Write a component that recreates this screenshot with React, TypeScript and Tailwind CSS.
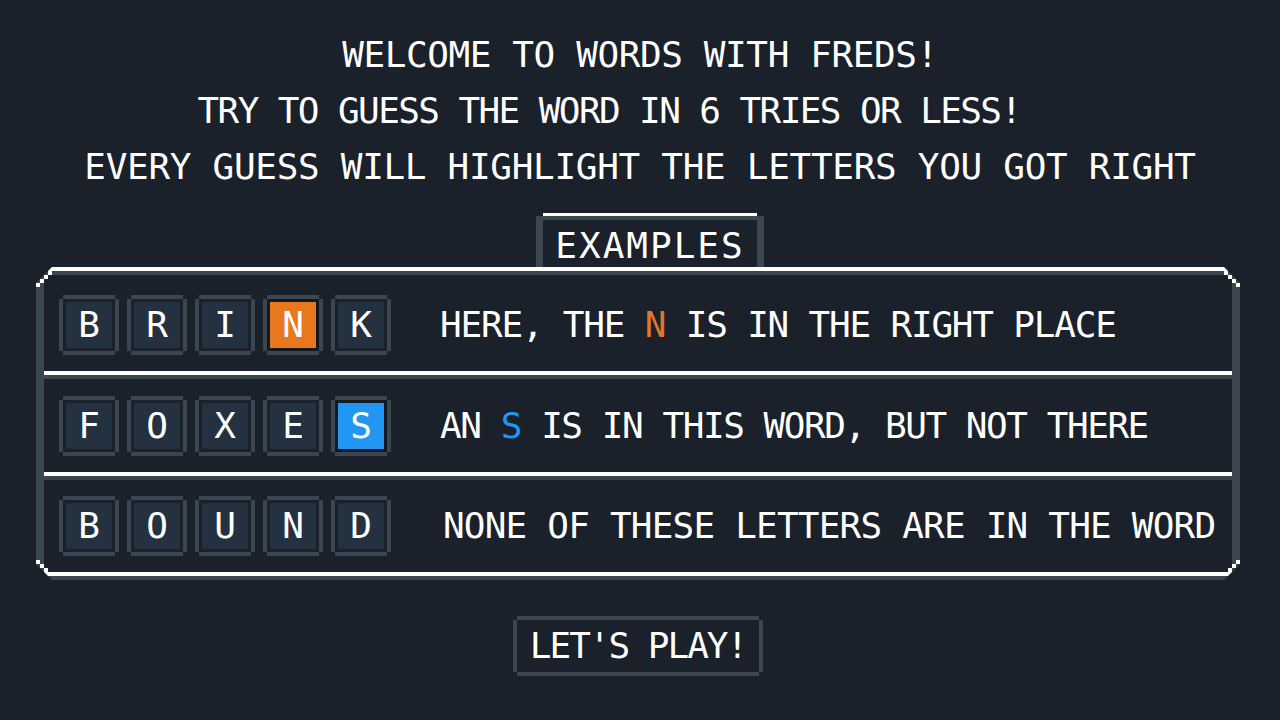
import React from 'react';

type Mark = 'hit' | 'near' | undefined;

const rows: { word: string; mark: number; kind: Mark; before: string; letter: string; after: string; text: string }[] = [
  { word: 'BRINK', mark: 3, kind: 'hit', before: 'HERE, THE ', letter: 'N', after: ' IS IN THE RIGHT PLACE', text: 'ml-[53px] tracking-[-1.2px]' },
  { word: 'FOXES', mark: 4, kind: 'near', before: 'AN ', letter: 'S', after: ' IS IN THIS WORD, BUT NOT THERE', text: 'ml-[53px] tracking-[-1.45px]' },
  { word: 'BOUND', mark: -1, kind: undefined, before: 'NONE OF THESE LETTERS ARE IN THE WORD', letter: '', after: '', text: 'ml-[56px] tracking-[-0.8px]' },
];

function Tile({ letter, kind }: { letter: string; kind: Mark }) {
  const fill = kind === 'hit' ? 'bg-[#e8781e]' : kind === 'near' ? 'bg-[#2196f3]' : 'bg-[#243140]';
  const ring = kind ? 'bg-[#121920]' : '';
  return (
    <div className={`w-[52px] h-[52px] p-[3px] ${ring} shadow-[-4px_0_0_#3a4650,4px_0_0_#3a4650,0_-4px_0_#3a4650,0_4px_0_#3a4650]`}>
      <div className={`${fill} w-full h-full flex items-center justify-center text-[36px] leading-none`}>{letter}</div>
    </div>
  );
}

// stepped pixel corner for the examples frame
function Corner({ className }: { className: string }) {
  return (
    <svg width="16" height="20" viewBox="0 0 16 20" className={`absolute ${className}`}>
      <rect x="12" y="4" width="4" height="4" fill="#fff" />
      <rect x="8" y="8" width="4" height="4" fill="#fff" />
      <rect x="4" y="12" width="4" height="4" fill="#fff" />
      <rect x="0" y="16" width="4" height="4" fill="#fff" />
    </svg>
  );
}

export default function App() {
  return (
    <div className="min-h-screen w-full bg-[#1a212a] text-white flex flex-col items-center pt-[27px] font-['DejaVu_Sans_Mono',monospace]">
      <p className="text-[36px] leading-[56px] tracking-[-0.4px]">WELCOME TO WORDS WITH FREDS!</p>
      <p className="text-[36px] leading-[56px] tracking-[-1.6px] pr-[62px]">TRY TO GUESS THE WORD IN 6 TRIES OR LESS!</p>
      <p className="text-[36px] leading-[56px] tracking-[-0.3px]">EVERY GUESS WILL HIGHLIGHT THE LETTERS YOU GOT RIGHT</p>

      {/* Examples tab */}
      <div className="mt-[21px] ml-[20px] w-[214px] h-[51px] pt-[8px] flex items-center justify-center text-[36px] leading-none tracking-[2px] shadow-[0_-3px_0_#ffffff,-7px_0_0_#3a4650,7px_0_0_#3a4650,inset_0_4px_0_#3a4650]">
        EXAMPLES
      </div>

      {/* Examples frame */}
      <div className="relative mr-[4px] w-[1204px] [clip-path:polygon(16px_0,calc(100%_-_16px)_0,100%_16px,100%_calc(100%_-_16px),calc(100%_-_16px)_100%,16px_100%,0_calc(100%_-_16px),0_16px)]">
        <div className="h-1 bg-white" />
        <div className="flex">
          <div className="w-2 bg-[#3a4650]" />
          <div className="flex-1 flex flex-col">
            {rows.map((row, i) => (
              <React.Fragment key={row.word}>
                {i > 0 && <div className="h-1 bg-white" />}
                <div
                  className={`border-t-4 border-[#3a4650] flex items-center pl-[19px] ${
                    i === 0 ? 'h-[100px] pt-1' : i === 1 ? 'h-[97px]' : 'h-[96px]'
                  }`}
                >
                  <div className="flex gap-4">
                    {row.word.split('').map((ch, j) => (
                      <Tile key={j} letter={ch} kind={j === row.mark ? row.kind : undefined} />
                    ))}
                  </div>
                  <p className={`${row.text} text-[36px] leading-none whitespace-pre`}>
                    {row.before}
                    {row.letter && (
                      <span className={row.kind === 'hit' ? 'text-[#e3762a]' : 'text-[#2196f3]'}>{row.letter}</span>
                    )}
                    {row.after}
                  </p>
                </div>
              </React.Fragment>
            ))}
          </div>
          <div className="w-2 bg-[#3a4650]" />
        </div>
        <div className="h-1 bg-white" />
        <div className="h-1 bg-[#3a4650]" />
        <Corner className="left-0 top-0" />
        <Corner className="right-0 top-0 -scale-x-100" />
        <Corner className="left-0 bottom-0 -scale-y-100" />
        <Corner className="right-0 bottom-0 -scale-x-100 -scale-y-100" />
      </div>

      <button className="mt-[40px] mr-[4px] w-[242px] h-[52px] flex items-center justify-center text-[36px] leading-none tracking-[-2px] text-white shadow-[-4px_0_0_#3a4650,4px_0_0_#3a4650,0_-4px_0_#3a4650,0_4px_0_#3a4650]">
        LET'S PLAY!
      </button>
    </div>
  );
}
